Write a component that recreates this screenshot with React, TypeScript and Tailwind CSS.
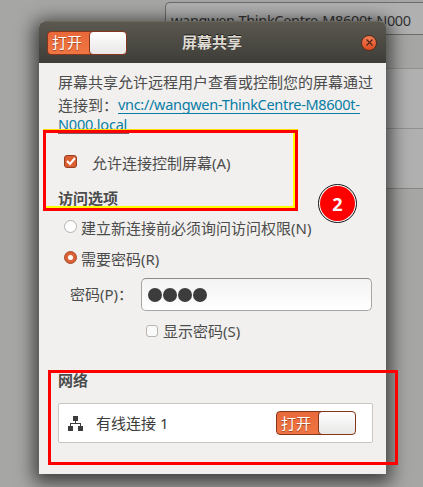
import React from "react";

function Switch({ className = "" }: { className?: string }) {
  return (
    <div
      className={`flex h-6 w-20 shrink-0 overflow-hidden rounded-[4px] border border-[#84371d] bg-gradient-to-b from-[#e9683a] to-[#ef7642] ${className}`}
    >
      <span className="flex w-[41px] items-center justify-center whitespace-nowrap pr-[3px] text-[15px] leading-none text-white [text-shadow:0_1px_1px_#9b421f]">
        打开
      </span>
      <span className="-my-px -mr-px flex-1 rounded-[4px] border border-[#84371d] bg-gradient-to-b from-white to-[#e8e7e6]" />
    </div>
  );
}

function NetworkIcon() {
  return (
    <svg width="15" height="15" viewBox="0 0 15 15" fill="#3c3c3c" shapeRendering="crispEdges">
      <path d="M5 0h5v5H8v2h5v3h2v5h-5v-5h2V8H3v2h2v5H0v-5h2V7h5V5H5z" />
    </svg>
  );
}

function Background() {
  return (
    <div className="flex h-full flex-col bg-[#a6a6a4] pt-[2px]">
      <div className="ml-[165px] h-[33px] shrink-0 whitespace-nowrap rounded-l-[5px] border border-r-0 border-[#6c6c6a] bg-[#b0b0b0] pl-[5px] text-[14.5px] leading-[34px] tracking-[-0.32px] text-[#333]">
        wangwen-ThinkCentre-M8600t-N000
      </div>
      <div className="h-[33px] shrink-0" />
      <div className="ml-[165px] h-[61px] shrink-0 border-y border-[#929290] bg-[#b0b0b0]" />
      <div className="ml-[165px] h-[60px] shrink-0 border-b border-[#868684] bg-[#b0b0b0]" />
    </div>
  );
}

function Dialog() {
  return (
    <div className="absolute left-[39px] top-[21px] flex h-[453px] w-[347px] flex-col rounded-t-[6px] bg-[#f1f0ef] shadow-[0_4px_18px_5px_rgba(0,0,0,0.62)]">
      <header className="flex h-[42px] shrink-0 items-center rounded-t-[6px] border-t border-[#68665d] bg-gradient-to-b from-[#5a584f] to-[#3e3d38] px-2">
        <Switch />
        <h1 className="ml-[55px] flex-1 text-[15px] font-bold text-[#dfdbd2] [text-shadow:0_-1px_0_#22211e]">屏幕共享</h1>
        <div className="mr-[1px] flex size-4 items-center justify-center rounded-full border border-[#592b1b] bg-gradient-to-b from-[#f27c55] to-[#db4c1e]">
          <svg width="7" height="7" viewBox="0 0 7 7" stroke="#4a2518" strokeWidth="1.1">
            <path d="M.5.5l6 6M6.5.5l-6 6" />
          </svg>
        </div>
      </header>

      <main className="flex flex-col whitespace-nowrap pl-[19px] pr-[14px] text-[15px]">
        <p className="mt-[8px] h-[22px] leading-[22px]">屏幕共享允许远程用户查看或控制您的屏幕通过</p>
        <p className="mt-px flex h-[22px] leading-[22px]">
          连接到：
          <a className="h-[20px] border-b border-[#087da5] text-[14.5px] leading-[21px] tracking-[-0.31px] text-[#087da5]">
            vnc://wangwen-ThinkCentre-M8600t-
          </a>
        </p>
        <p className="h-[18px] text-[14.5px] leading-[17px] tracking-[-0.2px]">
          <a className="block h-[17px] w-[71px] border-b border-[#087da5] text-[#087da5]">N000.local</a>
        </p>

        <div className="mt-[18px] flex h-[22px] items-center pl-[6px]">
          <span className="-mt-[3px] flex size-[13px] items-center justify-center rounded-[3px] border border-[#97401f] bg-[#dc5f34]">
            <svg width="10" height="9" viewBox="0 0 10 9" fill="none" stroke="white" strokeWidth="2">
              <path d="M1 4l3 3 5-6" />
            </svg>
          </span>
          <span className="ml-[15px]">允许连接控制屏幕(A)</span>
        </div>

        <h2 className="mt-[13px] h-[22px] font-bold leading-[22px]">访问选项</h2>

        <div className="mt-[8px] flex h-[22px] items-center pl-[6px]">
          <span className="-mt-[3px] size-[13px] rounded-full border border-[#b4b1ae] bg-white" />
          <span className="ml-[4px]">建立新连接前必须询问访问权限(N)</span>
        </div>
        <div className="mt-[9px] flex h-[22px] items-center pl-[6px]">
          <span className="-mt-[3px] flex size-[13px] items-center justify-center rounded-full border border-[#a54b2b] bg-[#db6237]">
            <span className="size-[5px] rounded-full bg-white" />
          </span>
          <span className="ml-[4px]">需要密码(R)</span>
        </div>

        <div className="mt-[8px] flex h-[33px] items-center pl-3">
          <span className="w-[71px]">密码(P)：</span>
          <div className="flex h-[33px] w-[231px] items-center rounded-[5px] border border-[#a8a6a4] border-t-[#8c8a88] bg-gradient-to-b from-[#f3f3f3] to-white pl-[6px]">
            <span className="flex gap-px">
              {[0, 1, 2, 3].map((dot) => (
                <i key={dot} className="size-[14px] rounded-full bg-[#3c3c3c]" />
              ))}
            </span>
          </div>
        </div>

        <div className="mt-[9px] flex h-[22px] items-center pl-[88px]">
          <span className="size-3 rounded-[3px] border border-[#b8b5b2] bg-[#f9f9f9]" />
          <span className="ml-[5px]">显示密码(S)</span>
        </div>

        <h2 className="mt-[27px] h-[22px] font-bold leading-[22px]">网络</h2>

        <div className="mt-[12px] flex h-10 w-[315px] items-center rounded-[2px] border border-[#c9c5c1] bg-white pl-[9px] pr-4 text-[#3c3c3c]">
          <NetworkIcon />
          <span className="ml-[13px] flex-1">有线连接 1</span>
          <Switch />
        </div>
      </main>
    </div>
  );
}

function Annotations() {
  return (
    <>
      <div className="absolute left-[43px] top-[129px] h-[82px] w-[255px] border-t border-[#ffdd00]">
        <div className="h-[81px] border-[3px] border-[#ff0000]">
          <div className="h-[75px] border-b-2 border-r-2 border-[#ffff00]">
            <div className="ml-3 h-px w-[71px] bg-[#7b5a62]" />
          </div>
        </div>
      </div>
      <div className="absolute left-[48px] top-[370px] h-[95px] w-[350px] border-[3px] border-[#ff0000]" />
      <div className="absolute left-[318px] top-[184px] flex size-[39px] items-center justify-center rounded-full border border-[#111] bg-white p-px">
        <span className="flex size-full items-center justify-center rounded-full bg-[#ff0000] font-['Open_Sans',sans-serif] text-[18px] font-bold leading-none text-white">
          2
        </span>
      </div>
    </>
  );
}

export default function App() {
  return (
    <div className="relative h-[487px] w-[423px] overflow-hidden font-['Noto_Sans','Noto_Sans_CJK_SC',sans-serif] text-[#4c4c4c]">
      <Background />
      <Dialog />
      <Annotations />
    </div>
  );
}
